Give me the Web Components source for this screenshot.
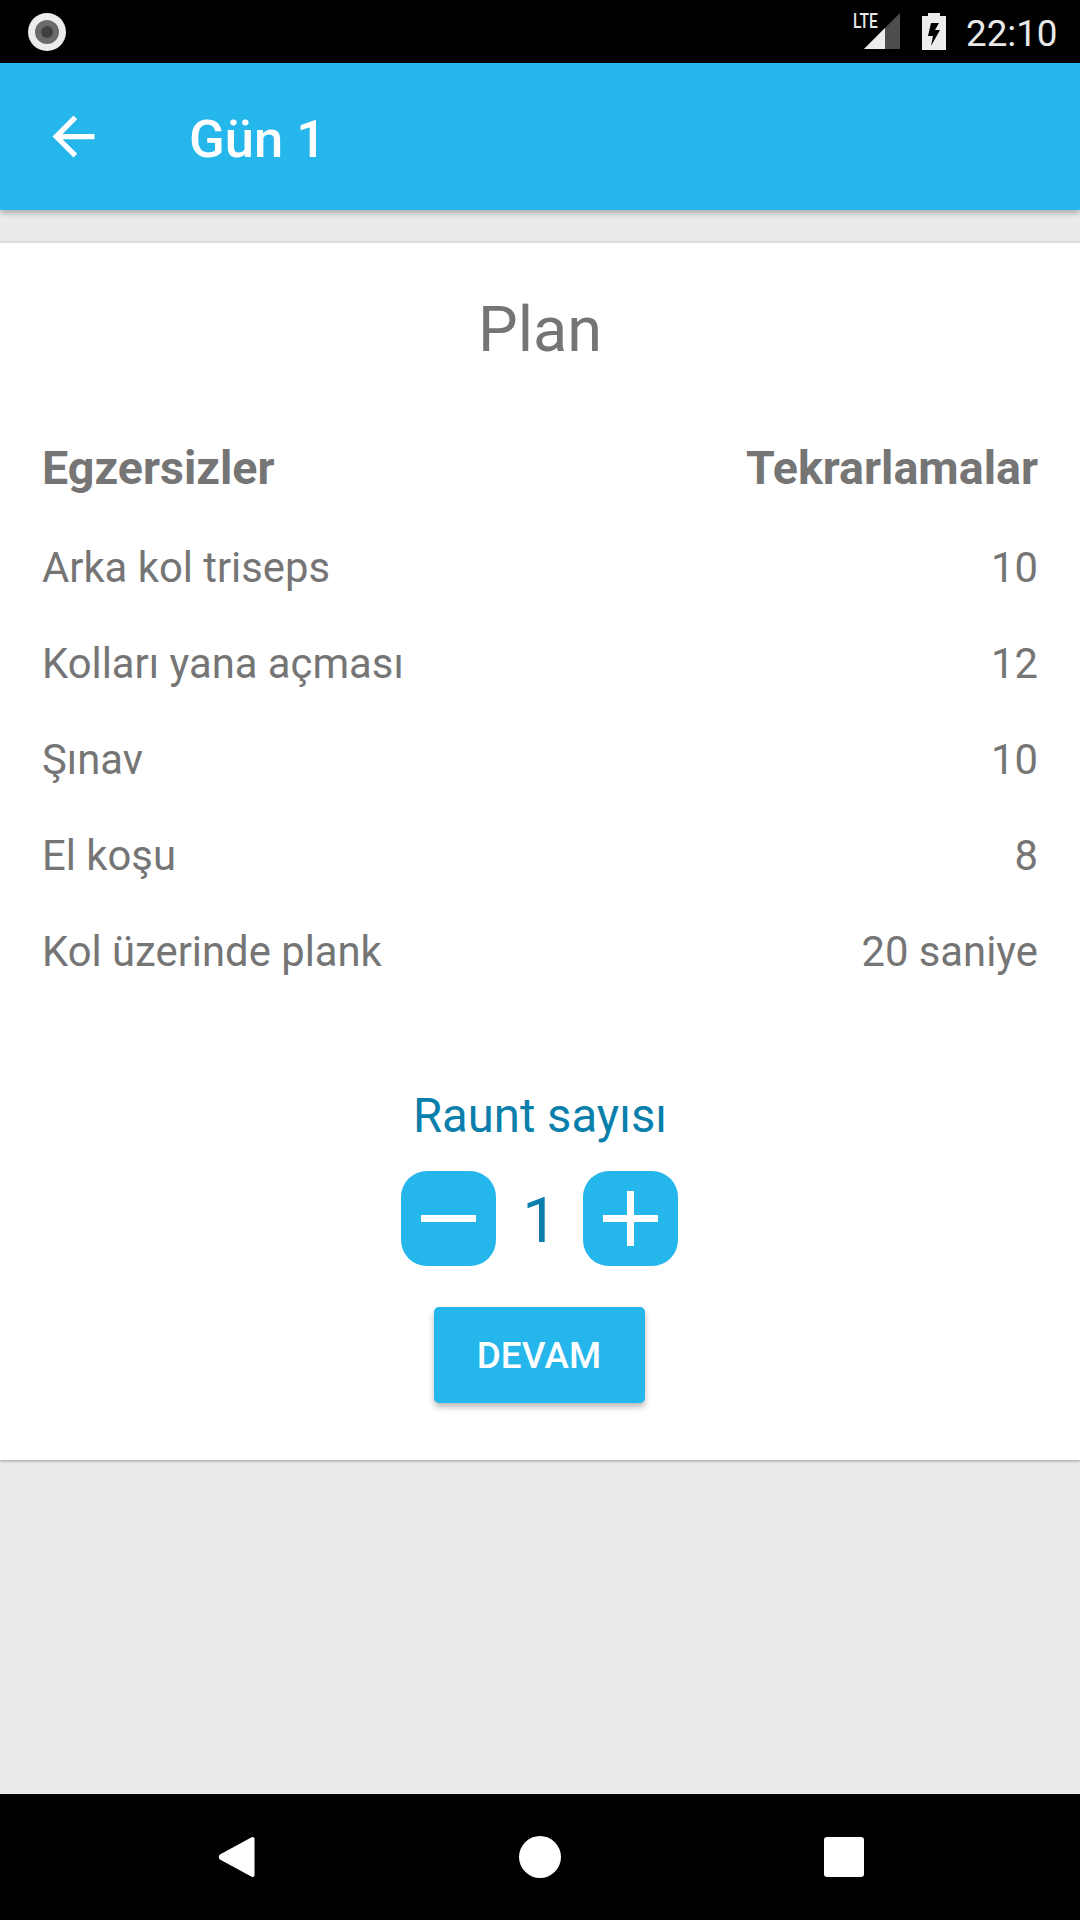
<!DOCTYPE html>
<html>
<head>
<meta charset="utf-8">
<style>
  html, body { margin: 0; height: 100%; }
  body {
    width: 1080px;
    height: 1920px;
    display: flex;
    flex-direction: column;
    background: #ebebeb;
    font-family: Roboto, "Liberation Sans", sans-serif;
    overflow: hidden;
  }
</style>
</head>
<body>
  <status-bar></status-bar>
  <app-bar title="Gün 1"></app-bar>
  <plan-card>
    <plan-row head name="Egzersizler" value="Tekrarlamalar"></plan-row>
    <plan-row name="Arka kol triseps" value="10"></plan-row>
    <plan-row name="Kolları yana açması" value="12"></plan-row>
    <plan-row name="Şınav" value="10"></plan-row>
    <plan-row name="El koşu" value="8"></plan-row>
    <plan-row name="Kol üzerinde plank" value="20 saniye"></plan-row>
  </plan-card>
  <nav-bar></nav-bar>

<script>
class StatusBar extends HTMLElement {
  constructor() {
    super();
    this.attachShadow({ mode: 'open' }).innerHTML = `
      <style>
        :host {
          display: flex;
          align-items: center;
          flex: none;
          height: 63px;
          padding: 0 22px 0 28px;
          background: #000;
          color: #e8e8e8;
        }
        .rec { flex: none; }
        .lte {
          position: absolute;
          left: 0;
          top: 14px;
          font: 500 19.5px/15px Roboto, sans-serif;
          transform: scaleX(.8);
          transform-origin: left top;
        }
        .signal { position: relative; width: 48px; height: 63px; margin-left: auto; margin-right: 21px; }
        .signal svg { position: absolute; left: 10px; top: 13px; }
        .batt { flex: none; margin-right: 20px; }
        .time { font-size: 36.75px; line-height: 63px; width: 92px; margin-top: 4px; white-space: nowrap; }
      </style>
      <svg class="rec" width="38" height="38" viewBox="0 0 38 38">
        <circle cx="19" cy="19" r="19" fill="#ececec"/>
        <circle cx="19" cy="19" r="12" fill="#6b6b6b"/>
        <circle cx="19" cy="19" r="6" fill="#404040"/>
      </svg>
      <div class="signal">
        <span class="lte">LTE</span>
        <svg width="38" height="37" viewBox="0 0 38 37">
          <path d="M37 0V36H1Z" fill="#4d4d4d"/>
          <path d="M22 15V36H1Z" fill="#ececec"/>
        </svg>
      </div>
      <svg class="batt" width="24" height="37" viewBox="0 0 24 37">
        <path d="M6 0h12v3h6v34H0V3h6z" fill="#ececec"/>
        <path d="M9 10h8l-4 7h5L9 33l2-10H6z" fill="#000"/>
      </svg>
      <span class="time">22:10</span>
    `;
  }
}
customElements.define('status-bar', StatusBar);

class AppBar extends HTMLElement {
  constructor() {
    super();
    this.attachShadow({ mode: 'open' }).innerHTML = `
      <style>
        :host {
          display: flex;
          align-items: center;
          flex: none;
          position: relative;
          height: 147px;
          padding-left: 42px;
          background: #25b6eb;
          box-shadow: 0 3px 6px rgba(0, 0, 0, .28);
          color: #fff;
        }
        svg { flex: none; margin-right: 84px; }
        .title { font-size: 52.5px; font-weight: 500; padding-top: 5px; }
      </style>
      <svg width="63" height="63" viewBox="0 0 24 24" fill="#fff">
        <path d="M20 11H7.83l5.59-5.59L12 4l-8 8 8 8 1.41-1.41L7.83 13H20v-2z"/>
      </svg>
      <span class="title">${this.getAttribute('title')}</span>
    `;
  }
}
customElements.define('app-bar', AppBar);

class PlanRow extends HTMLElement {
  constructor() {
    super();
    const head = this.hasAttribute('head');
    this.attachShadow({ mode: 'open' }).innerHTML = `
      <style>
        :host {
          display: flex;
          justify-content: space-between;
          align-items: center;
          height: 96px;
          padding: 0 42px;
          color: #757575;
          font-size: ${head ? '46.6px' : '41.8px'};
          font-weight: ${head ? 700 : 400};
          ${head ? 'margin-bottom: 3px;' : ''}
        }
      </style>
      <span>${this.getAttribute('name')}</span>
      <span>${this.getAttribute('value')}</span>
    `;
  }
}
customElements.define('plan-row', PlanRow);

class RoundStepper extends HTMLElement {
  constructor() {
    super();
    this.attachShadow({ mode: 'open' }).innerHTML = `
      <style>
        :host {
          display: flex;
          flex-direction: column;
          align-items: center;
          color: #0a7fab;
        }
        .label { font-size: 47.25px; line-height: 56px; }
        .row { display: flex; align-items: center; margin: 27px 2px 0 0; }
        .value { width: 87px; padding: 4px 0 0 2px; box-sizing: border-box; text-align: center; font-size: 63px; line-height: 91px; }
        button {
          display: flex;
          align-items: center;
          justify-content: center;
          width: 95px;
          height: 95px;
          padding: 0;
          border: 0;
          border-radius: 26px;
          background: #25b6eb;
        }
      </style>
      <span class="label">Raunt sayısı</span>
      <div class="row">
        <button>
          <svg width="55" height="55" viewBox="0 0 55 55"><rect y="24" width="55" height="7" fill="#fff"/></svg>
        </button>
        <span class="value">1</span>
        <button>
          <svg width="55" height="55" viewBox="0 0 55 55"><path d="M0 24h24V0h7v24h24v7H31v24h-7V31H0z" fill="#fff"/></svg>
        </button>
      </div>
    `;
  }
}
customElements.define('round-stepper', RoundStepper);

class PrimaryButton extends HTMLElement {
  constructor() {
    super();
    this.attachShadow({ mode: 'open' }).innerHTML = `
      <style>
        :host {
          display: flex;
          align-items: center;
          justify-content: center;
          width: 211px;
          height: 96px;
          border-radius: 5px;
          background: #25b6eb;
          box-shadow: 0 4px 6px rgba(0, 0, 0, .28);
          color: #fff;
          font-size: 36.75px;
          font-weight: 500;
          letter-spacing: .2px;
        }
      </style>
      <slot></slot>
    `;
  }
}
customElements.define('primary-button', PrimaryButton);

class PlanCard extends HTMLElement {
  constructor() {
    super();
    this.attachShadow({ mode: 'open' }).innerHTML = `
      <style>
        :host {
          display: flex;
          flex-direction: column;
          align-items: stretch;
          flex: none;
          height: 1218px;
          margin-top: 32px;
          box-sizing: border-box;
          background: #fff;
          border-top: 1px solid #dcdcdc;
          box-shadow: 0 1px 3px rgba(0, 0, 0, .35);
        }
        h1 {
          margin: 0;
          height: 177px;
          line-height: 174px;
          text-align: center;
          font-size: 63px;
          font-weight: 400;
          color: #757575;
        }
        round-stepper { margin-top: 89px; }
        primary-button { align-self: center; margin: 41px 2px 0 0; }
      </style>
      <h1>Plan</h1>
      <slot></slot>
      <round-stepper></round-stepper>
      <primary-button>DEVAM</primary-button>
    `;
  }
}
customElements.define('plan-card', PlanCard);

class NavBar extends HTMLElement {
  constructor() {
    super();
    this.attachShadow({ mode: 'open' }).innerHTML = `
      <style>
        :host {
          display: flex;
          align-items: center;
          justify-content: space-between;
          flex: none;
          height: 126px;
          margin-top: auto;
          padding: 0 216px 0 218px;
          background: #000;
        }
      </style>
      <svg width="37" height="42" viewBox="0 0 39 42" preserveAspectRatio="none"><path d="M35 1.500c1.600-1.200 3.500-.4 3.500 1.500v36c0 1.900-1.900 2.700-3.500 1.500L2 23.500c-1.500-1.200-1.500-3.800 0-5z" fill="#fff"/></svg>
      <svg width="42" height="42" viewBox="0 0 42 42"><circle cx="21" cy="21" r="21" fill="#fff"/></svg>
      <svg width="40" height="40" viewBox="0 0 40 40"><rect width="40" height="40" rx="3" fill="#fff"/></svg>
    `;
  }
}
customElements.define('nav-bar', NavBar);
</script>
</body>
</html>
